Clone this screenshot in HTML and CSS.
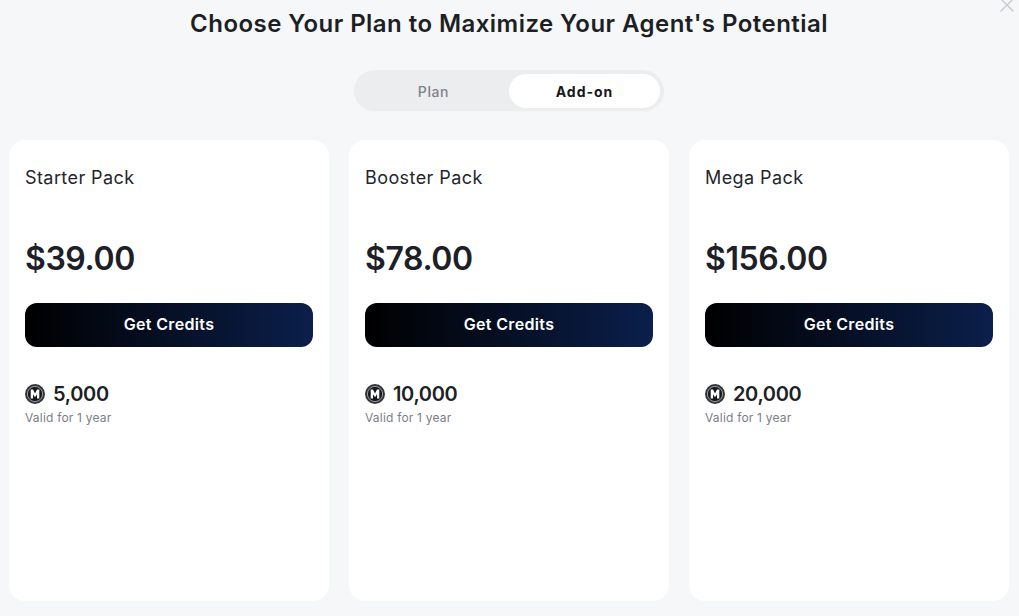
FILE: index.html
```html
<!DOCTYPE html>
<html lang="en">
<head>
<meta charset="utf-8">
<title>Choose Your Plan</title>
<link rel="stylesheet" href="styles.css">
</head>
<body>
<div class="page">
  <button class="close" aria-label="Close">
    <svg width="16" height="16" viewBox="0 0 16 16"><path d="M1.5 1.5 14.5 14.5M14.5 1.5 1.5 14.5" stroke="#c9ccd1" stroke-width="1.5" fill="none"/></svg>
  </button>
  <h1 class="title">Choose Your Plan to Maximize Your Agent's Potential</h1>
  <div class="toggle-row">
    <div class="toggle">
      <span class="tab">Plan</span>
      <span class="tab active">Add-on</span>
    </div>
  </div>
  <div class="cards">
    <section class="card">
      <h2 class="name">Starter Pack</h2>
      <div class="price">$39.00</div>
      <button class="cta">Get Credits</button>
      <div class="credits">
        <svg class="coin" viewBox="0 0 20 20"><circle cx="10" cy="10" r="10" fill="#333438"/><circle cx="10" cy="10" r="7.6" fill="#17181b" stroke="#b9babd" stroke-width="0.8"/><path d="M5.7 14.6V5.6H8L10 9.4l2-3.8h2.3v9h-2.3V10.2L10 13.2 8 10.2v4.4Z" fill="#fff"/></svg>
        <span>5,000</span>
      </div>
      <div class="valid">Valid for 1 year</div>
    </section>
    <section class="card">
      <h2 class="name">Booster Pack</h2>
      <div class="price">$78.00</div>
      <button class="cta">Get Credits</button>
      <div class="credits">
        <svg class="coin" viewBox="0 0 20 20"><circle cx="10" cy="10" r="10" fill="#333438"/><circle cx="10" cy="10" r="7.6" fill="#17181b" stroke="#b9babd" stroke-width="0.8"/><path d="M5.7 14.6V5.6H8L10 9.4l2-3.8h2.3v9h-2.3V10.2L10 13.2 8 10.2v4.4Z" fill="#fff"/></svg>
        <span>10,000</span>
      </div>
      <div class="valid">Valid for 1 year</div>
    </section>
    <section class="card">
      <h2 class="name">Mega Pack</h2>
      <div class="price">$156.00</div>
      <button class="cta">Get Credits</button>
      <div class="credits">
        <svg class="coin" viewBox="0 0 20 20"><circle cx="10" cy="10" r="10" fill="#333438"/><circle cx="10" cy="10" r="7.6" fill="#17181b" stroke="#b9babd" stroke-width="0.8"/><path d="M5.7 14.6V5.6H8L10 9.4l2-3.8h2.3v9h-2.3V10.2L10 13.2 8 10.2v4.4Z" fill="#fff"/></svg>
        <span>20,000</span>
      </div>
      <div class="valid">Valid for 1 year</div>
    </section>
  </div>
</div>
</body>
</html>
```
FILE: styles.css
```css
* { box-sizing: border-box; }
html, body { margin: 0; height: 100%; overflow: hidden; }
body {
  background: #f6f7f9;
  font-family: Inter, "Liberation Sans", sans-serif;
  color: #1d1f24;
}
.page {
  position: relative;
  height: 616px;
  padding: 0 10px 15px 9px;
  display: flex;
  flex-direction: column;
}
.close {
  position: absolute;
  top: -3px;
  right: 4px;
  width: 16px;
  height: 16px;
  padding: 0;
  border: 0;
  background: none;
  line-height: 0;
}
.title {
  margin: 7px 0 0;
  height: 34px;
  font-size: 24px;
  line-height: 34px;
  font-weight: 600;
  text-align: center;
  letter-spacing: 0.45px;
}
.toggle-row {
  display: flex;
  justify-content: center;
  margin-top: 29px;
}
.toggle {
  width: 310px;
  height: 42px;
  padding: 4px;
  display: flex;
  background: #ecedef;
  border-radius: 21px;
  box-shadow: inset 0 -1px 0 #f3f4f5;
}
.tab {
  flex: 1;
  display: flex;
  align-items: center;
  justify-content: center;
  border-radius: 17px;
  font-size: 14px;
  font-weight: 500;
  color: #7e828a;
  letter-spacing: 0.6px;
}
.tab.active {
  background: #fff;
  color: #16181c;
  font-weight: 700;
  letter-spacing: 1px;
}
.cards {
  flex: 1;
  margin-top: 28px;
  display: grid;
  grid-template-columns: repeat(3, 320px);
  gap: 20px;
}
.card {
  background: #fff;
  border-radius: 16px;
  padding: 26px 16px 0;
}
.name {
  margin: 0;
  font-size: 18px;
  line-height: 24px;
  font-weight: 400;
  color: #24262b;
  letter-spacing: 0.42px;
}
.price {
  margin-top: 50px;
  font-size: 32px;
  line-height: 38px;
  font-weight: 600;
  color: #1d2027;
  letter-spacing: -0.4px;
}
.cta {
  display: block;
  width: 288px;
  height: 44px;
  margin-top: 25px;
  border: 0;
  border-radius: 12px;
  background: linear-gradient(90deg, #000 0%, #0b1f4b 100%);
  color: #fff;
  font: 600 16px/42px Inter, "Liberation Sans", sans-serif;
  letter-spacing: 0.35px;
  padding: 0 0 2px;
}
.credits {
  display: flex;
  align-items: center;
  gap: 8px;
  margin-top: 33px;
  height: 28px;
  font-size: 20px;
  font-weight: 600;
  color: #1d1f24;
  letter-spacing: -0.35px;
}
.coin { width: 20px; height: 20px; flex: none; }
.valid {
  margin-top: 1px;
  font-size: 12px;
  line-height: 18px;
  color: #7b7e85;
  letter-spacing: 0.2px;
}
```
